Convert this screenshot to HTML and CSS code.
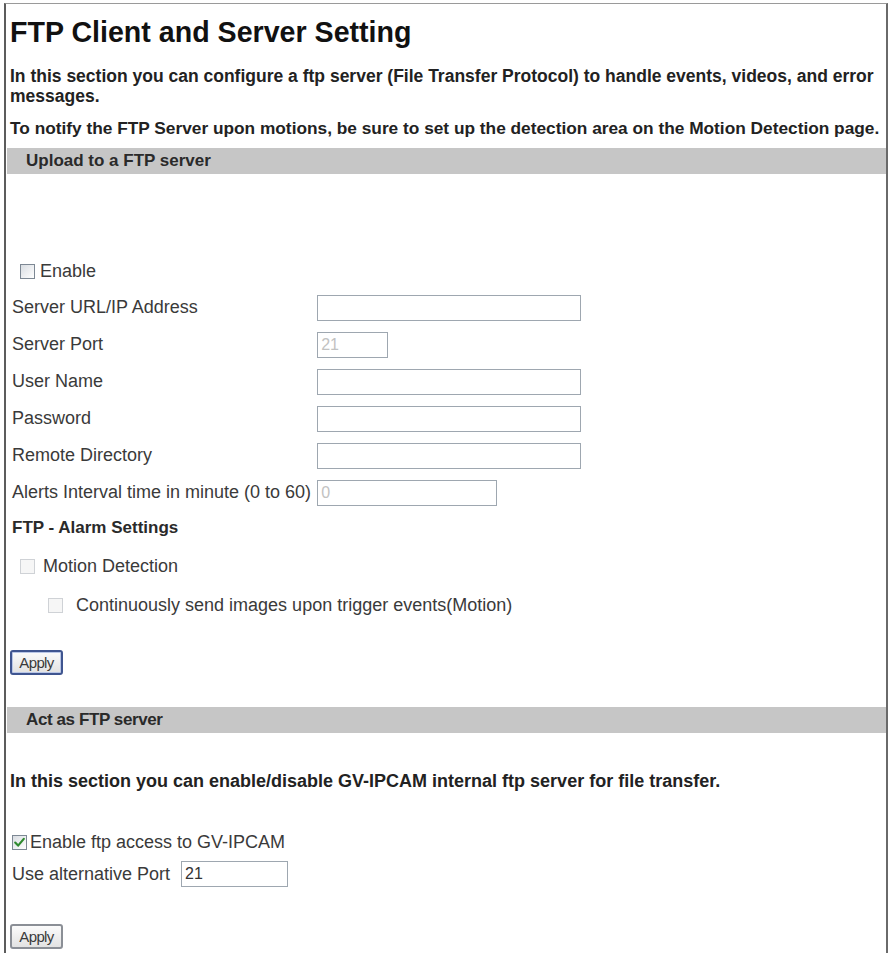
FILE: index.html
```html
<!DOCTYPE html>
<html>
<head>
    <title>FTP Client and Server Setting</title>
    <link rel="stylesheet" href="styles.css">
</head>
<body>
    <div class="page">
        <h1>FTP Client and Server Setting</h1>
        <p class="intro">In this section you can configure a ftp server (File Transfer Protocol) to handle events, videos, and error messages.</p>
        <p class="intro notify">To notify the FTP Server upon motions, be sure to set up the detection area on the Motion Detection page.</p>

        <div class="bar">Upload to a FTP server</div>

        <form id="uploadForm" class="upload">
            <label class="check-row enable-row">
                <input type="checkbox" name="enable">
                <span class="box"></span>Enable
            </label>

            <table class="fields">
                <tr>
                    <td class="name">Server URL/IP Address</td>
                    <td><input type="text" class="field wide" name="server"></td>
                </tr>
                <tr>
                    <td class="name">Server Port</td>
                    <td><input type="text" class="field port" name="port" value="21" disabled></td>
                </tr>
                <tr>
                    <td class="name">User Name</td>
                    <td><input type="text" class="field wide" name="user"></td>
                </tr>
                <tr>
                    <td class="name">Password</td>
                    <td><input type="password" class="field wide" name="password"></td>
                </tr>
                <tr>
                    <td class="name">Remote Directory</td>
                    <td><input type="text" class="field wide" name="directory"></td>
                </tr>
                <tr>
                    <td class="name">Alerts Interval time in minute (0 to 60)</td>
                    <td><input type="text" class="field interval" name="interval" value="0" disabled></td>
                </tr>
            </table>

            <h3 class="sub-head">FTP - Alarm Settings</h3>

            <label class="check-row alarm-row">
                <input type="checkbox" name="motion" disabled>
                <span class="box off"></span>Motion Detection
            </label>
            <label class="check-row alarm-sub">
                <input type="checkbox" name="continuous" disabled>
                <span class="box off"></span>Continuously send images upon trigger events(Motion)
            </label>

            <button type="button" class="apply focused">Apply</button>
        </form>

        <div class="bar second">Act as FTP server</div>

        <form id="serverForm" class="server">
            <p class="intro narrow">In this section you can enable/disable GV-IPCAM internal ftp server for file transfer.</p>

            <label class="check-row access-row">
                <input type="checkbox" name="access" checked>
                <span class="box">
                    <svg viewBox="0 0 15 15" width="15" height="15">
                        <path d="M3.2 7.6 L6.1 10.6 L11.8 3.9" fill="none" stroke="#2f8a2f" stroke-width="2.2" stroke-linecap="round" stroke-linejoin="round"/>
                    </svg>
                </span>Enable ftp access to GV-IPCAM
            </label>

            <div class="port-row">
                <span>Use alternative Port</span>
                <input type="text" class="field alt-port" name="altPort" value="21">
            </div>

            <button type="button" class="apply">Apply</button>
        </form>
    </div>
</body>
</html>
```

FILE: styles.css
```css
body {
    margin: 0;
    font-family: "Liberation Sans", Arial, sans-serif;
    color: #3a3a3a;
    background: #ffffff;
}
.page {
    margin: 3px 4px 0 4px;
    border-top: 1px solid #9a9a9a;
    border-left: 2px solid #5c5c5c;
    border-right: 2px solid #6a6a6a;
    padding: 12px 0 0 4px;
    min-height: 960px;
}
h1 {
    margin: 0 0 18px 0;
    font-size: 28.6px;
    line-height: 32px;
    color: #111;
}
.intro {
    margin: 0;
    font-size: 17.5px;
    line-height: 20px;
    font-weight: bold;
    color: #222;
}
.notify {
    margin-top: 12px;
    font-size: 17.3px;
    white-space: nowrap;
}
.bar {
    margin: 10px 0 0 -3px;
    height: 26px;
    line-height: 26px;
    padding-left: 19px;
    background: #c6c6c6;
    font-size: 17px;
    font-weight: bold;
    color: #2a2a2a;
}
.bar.second {
    margin-top: 32px;
    letter-spacing: -0.4px;
}

/* checkbox rows */
.check-row {
    display: flex;
    align-items: center;
    height: 20px;
    font-size: 18px;
}
.check-row input {
    display: none;
}
.box {
    width: 13px;
    height: 13px;
    border: 1px solid #7d8894;
    background: linear-gradient(135deg, #d9dde2, #ffffff);
    display: inline-block;
    flex: none;
}
.box svg {
    display: block;
    margin: -1px;
}
.box.off {
    border-color: #cfd2d6;
    background: #f6f6f6;
}
.enable-row {
    margin: 87px 0 0 10px;
}
.enable-row .box {
    margin-right: 5px;
}

/* field table */
.fields {
    margin-top: 8px;
    border-collapse: collapse;
    font-size: 18px;
}
.fields td {
    height: 37px;
    padding: 0 2px 0 4px;
    vertical-align: middle;
}
.fields td.name {
    white-space: nowrap;
    padding: 0 2px 0 2px;
}
.field {
    box-sizing: border-box;
    height: 26px;
    border: 1.5px solid #9ea7b0;
    padding: 0 3px;
    font-family: "Liberation Sans", Arial, sans-serif;
    font-size: 16px;
    color: #333;
    background: #fff;
    display: block;
}
.field:disabled {
    color: #c2c2c2;
    background: #fff;
}
.wide {
    width: 264px;
}
.port {
    width: 71px;
}
.interval {
    width: 180px;
}
.sub-head {
    margin: 7px 0 0 2px;
    font-size: 17px;
    line-height: 20px;
    color: #2a2a2a;
}
.alarm-row {
    margin: 18px 0 0 10px;
}
.alarm-row .box {
    margin-right: 8px;
}
.alarm-sub {
    margin: 19px 0 0 38px;
}
.alarm-sub .box {
    margin-right: 13px;
}

/* buttons */
.apply {
    display: block;
    width: 53px;
    height: 25px;
    margin-top: 35px;
    padding: 0;
    border: 2px solid #8b8f96;
    border-radius: 3px;
    background: linear-gradient(#fbfbfb, #e2e2e2);
    font-family: "Liberation Sans", Arial, sans-serif;
    font-size: 15px;
    letter-spacing: -0.6px;
    color: #3a3a3a;
    cursor: pointer;
}
.apply.focused {
    border-color: #3f5590;
    box-shadow: inset 0 0 0 1px #b9c6e6;
}

/* second section */
.narrow {
    margin-top: 38px;
    font-size: 18px;
}
.access-row {
    margin: 41px 0 0 2px;
}
.access-row .box {
    margin-right: 3px;
}
.port-row {
    display: flex;
    align-items: center;
    gap: 11px;
    margin: 9px 0 0 2px;
    font-size: 18px;
}
.alt-port {
    width: 107px;
}
.server .apply {
    margin-top: 37px;
}
```
